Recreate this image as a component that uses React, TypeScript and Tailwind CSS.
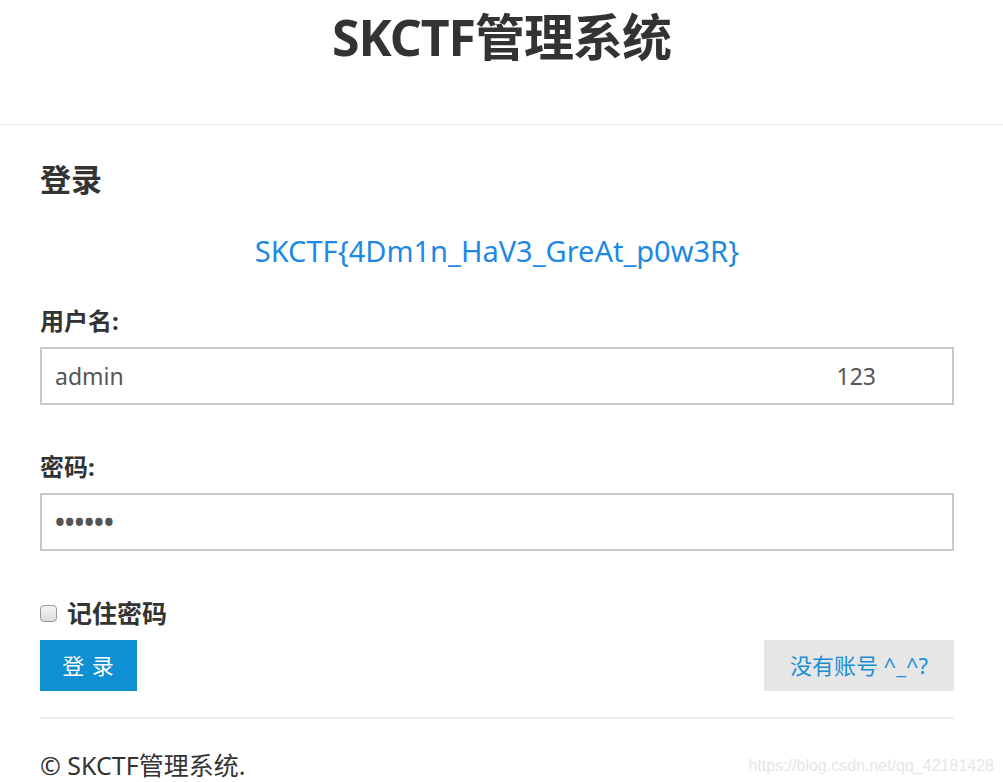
import React from 'react';

const font = { fontFamily: '"Noto Sans", "Noto Sans CJK SC", sans-serif' };

export default function App() {
  return (
    <div className="relative min-h-[782px] bg-white text-[#333]" style={font}>
      {/* Header */}
      <header className="h-[125px] border-b border-[#ebebeb]">
        <h1 className="pt-[6px] text-center text-[50px] font-bold leading-[62px] tracking-[-1px] text-[#333]">
          SKCTF管理系统
        </h1>
      </header>

      <main className="mx-[40px] w-[914px]">
        <h2 className="mt-[34px] text-[31px] font-bold leading-[40px]">登录</h2>

        <p className="mt-[32px] text-center text-[29px] leading-[40px] text-[#1e88e5]">
          SKCTF{'{'}4Dm1n_HaV3_GreAt_p0w3R{'}'}
        </p>

        {/* Username */}
        <label className="mt-[35px] block text-[24px] font-bold leading-[30px]">用户名:</label>
        <div className="mt-[11px] flex h-[58px] items-center border-2 border-[#c8c8c8] pl-[13px] text-[23px] text-[#555]">
          <span>admin</span>
          <span className="ml-auto mr-[76px]">123</span>
        </div>

        {/* Password */}
        <label className="mt-[47px] block text-[24px] font-bold leading-[30px]">密码:</label>
        <div className="mt-[11px] flex h-[58px] items-center border-2 border-[#c8c8c8] pl-[13px] text-[#555]">
          <span className="text-[26px] font-bold">••••••</span>
        </div>

        {/* Remember */}
        <div className="mt-[49px] flex h-[26px] items-center">
          <span className="h-[17px] w-[17px] rounded-[4px] border border-[#999] bg-gradient-to-b from-[#f4f4f4] to-[#dcdcdc]" />
          <span className="ml-[10px] text-[25px] font-bold leading-[26px]">记住密码</span>
        </div>

        {/* Buttons */}
        <div className="mt-[14px] flex items-center justify-between">
          <button className="h-[51px] w-[97px] bg-[#0e90d2] text-[22px] tracking-[1px] text-white">
            登 录
          </button>
          <button className="h-[51px] w-[190px] bg-[#e6e6e6] text-[22px] text-[#1b8fd6]">
            没有账号 ^_^?
          </button>
        </div>

        <hr className="mt-[26px] border-t-2 border-[#eeeeee]" />

        <footer className="mt-[31px] text-[25px] leading-[30px] text-[#333]">© SKCTF管理系统.</footer>
      </main>

      <div
        className="absolute bottom-[4px] right-[9px] text-[16px] text-[#e6e6e6]"
        style={{ fontFamily: '"Liberation Sans", Arial, sans-serif' }}
      >
        https://blog.csdn.net/qq_42181428
      </div>
    </div>
  );
}
